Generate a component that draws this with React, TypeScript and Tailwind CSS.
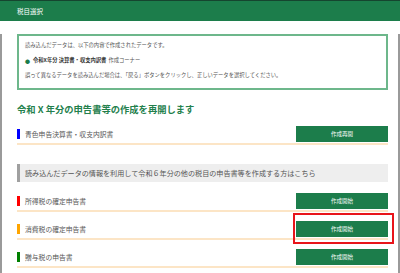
import React from 'react'

interface Row {
  label: string
  color: string
  button: string
  highlight?: boolean
}

const rows: Row[] = [
  { label: '所得税の確定申告書', color: 'bg-[#ff0000]', button: '作成開始' },
  { label: '消費税の確定申告書', color: 'bg-[#ffa500]', button: '作成開始', highlight: true },
  { label: '贈与税の申告書', color: 'bg-[#008000]', button: '作成開始' },
]

const GreenButton: React.FC<{ text: string; highlight?: boolean }> = ({ text, highlight }) => (
  <div className="relative">
    <button className="w-[92px] h-[16px] bg-[#1c7d4b] text-white text-[5.5px] leading-none flex items-center justify-center">
      {text}
    </button>
    {highlight && (
      <div className="absolute -left-[3px] -right-[6px] -top-[8px] -bottom-[7px] border-2 border-solid border-[#e8141a]" />
    )}
  </div>
)

const ListRow: React.FC<{ row: Row }> = ({ row }) => (
  <div className="flex items-center justify-between pt-[9px] pb-[1px] border-b-2 border-[#fce5c6]">
    <div className="flex items-center">
      <span className={`w-[3px] h-[10px] ${row.color}`} />
      <span className="ml-[5px] text-[6.8px] text-[#555]">{row.label}</span>
    </div>
    <GreenButton text={row.button} highlight={row.highlight} />
  </div>
)

const App: React.FC = () => {
  return (
    <div
      className="w-[400px] h-[273px] bg-white overflow-hidden"
      style={{ fontFamily: '"Noto Sans CJK JP", "Noto Sans", sans-serif' }}
    >
      {/* Header */}
      <div className="h-[21px] bg-[#1c7d4b] border-t border-[#15452f] flex items-center pl-[17px]">
        <span className="text-white text-[6.5px] leading-none">税目選択</span>
      </div>

      <div className="h-[252px] border-l-2 border-r-2 border-b-2 border-[#9a9a9a] pl-[15px] pr-[10px]">
        {/* Info box */}
        <div className="mt-[13px] h-[56px] border-2 border-[#6db78b] pl-[6px] pt-[7px] text-[#555] text-[5.3px] leading-none">
          <p>読み込んだデータは、以下の内容で作成されたデータです。</p>
          <p className="mt-[10px] flex items-center">
            <span className="text-[#1c7d4b] text-[5px] mr-[3px]">●</span>
            <span className="font-bold text-[#333]">令和X年分 決算書・収支内訳書</span>
            <span className="ml-[2px]">作成コーナー</span>
          </p>
          <p className="mt-[9px]">誤って異なるデータを読み込んだ場合は、「戻る」ボタンをクリックし、正しいデータを選択してください。</p>
        </div>

        {/* Heading */}
        <h2 className="mt-[15px] text-[9.3px] leading-none font-bold text-[#23804c]">
          令和 X 年分の申告書等の作成を再開します
        </h2>

        {/* Resume row */}
        <div className="mt-[12px] flex items-center justify-between pb-[1px] border-b-2 border-[#fce5c6]">
          <div className="flex items-center">
            <span className="w-[3px] h-[10px] bg-[#0000ff]" />
            <span className="ml-[5px] text-[6.8px] text-[#555]">青色申告決算書・収支内訳書</span>
          </div>
          <GreenButton text="作成再開" />
        </div>

        {/* Notice */}
        <div className="mt-[19px] h-[18px] bg-[#eeeeee] border-l-[3px] border-[#a0a0a0] flex items-center pl-[5px]">
          <span className="text-[7.1px] leading-none text-[#555] whitespace-nowrap">
            読み込んだデータの情報を利用して令和６年分の他の税目の申告書等を作成する方はこちら
          </span>
        </div>

        <div className="mt-[2px]">
          {rows.map((r) => (
            <ListRow key={r.label} row={r} />
          ))}
        </div>
      </div>
    </div>
  )
}

export default App
